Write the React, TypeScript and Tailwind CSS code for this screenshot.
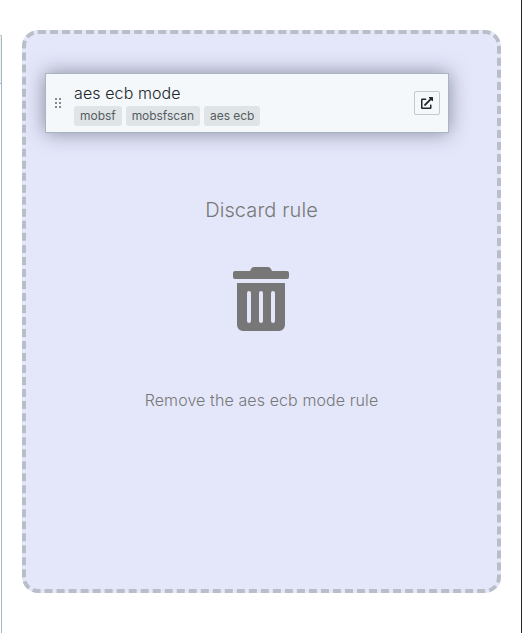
import React from "react";
import { FaExternalLinkAlt, FaTrashAlt } from "react-icons/fa";

const tags = ["mobsf", "mobsfscan", "aes ecb"];

function Grip() {
  return (
    <div className="mb-px grid grid-cols-2 gap-[2px]">
      {[0, 1, 2, 3, 4, 5].map((i) => (
        <span key={i} className="h-[2px] w-[2px] bg-[#858a8d]" />
      ))}
    </div>
  );
}

function RuleCard() {
  return (
    <div className="flex h-[60px] w-[404px] items-center border border-[#a7b5c1] bg-[#f4f8fb] pr-2 pl-[9px] shadow-[0_0_20px_rgba(50,48,75,0.52)]">
      <Grip />
      <div className="ml-[13px] flex-1">
        <div className="h-6 text-[16px] leading-6 font-light tracking-[0.1px] text-[#212529]">aes ecb mode</div>
        <div className="mt-px flex gap-1">
          {tags.map((t) => (
            <span key={t} className="h-5 rounded-[3px] bg-[#dfe4e7] px-1.5 text-[12px] leading-5 tracking-[-0.04px] text-[#565c60]">
              {t}
            </span>
          ))}
        </div>
      </div>
      <button className="flex h-6 w-[26px] items-center justify-center rounded-[2px] border border-[#c3c8cb] text-[#212529]">
        <FaExternalLinkAlt size={12} />
      </button>
    </div>
  );
}

export default function App() {
  return (
    <div className="flex h-[633px] w-[522px] overflow-hidden bg-white font-['Inter',sans-serif]">
      <aside className="mt-[35px] w-[2px] rounded-tr-[3px] border-t border-r border-[#a7b5c1]">
        <div className="h-[48px] border-b border-[#a7b5c1] bg-[#eef0f2]" />
      </aside>
      <main className="mt-[30px] ml-5 flex h-[563px] w-[479px] flex-col items-center rounded-[16px] border-4 border-dashed border-[#b8bfc8] bg-[#e4e7fa] text-[#777]">
        <div className="mt-[39px] mr-[29px]">
          <RuleCard />
        </div>
        <h1 className="mt-[62px] text-[20px] leading-[30px] font-light tracking-[0.1px]">Discard rule</h1>
        <FaTrashAlt className="mt-[42px] mr-px h-16 w-14" />
        <p className="mt-[57px] text-[16px] leading-6 font-light tracking-[0.1px]">Remove the aes ecb mode rule</p>
      </main>
      <div className="ml-auto w-px bg-[#25282b]" />
    </div>
  );
}
